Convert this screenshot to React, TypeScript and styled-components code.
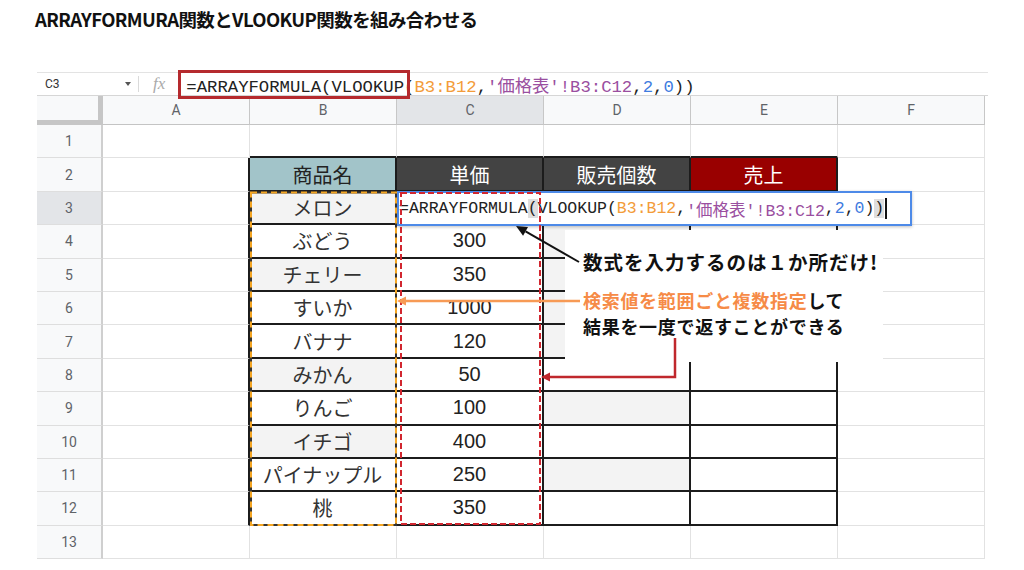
import styled, { createGlobalStyle } from "styled-components";

const GlobalStyle = createGlobalStyle`
  html, body { margin: 0; padding: 0; background: #fff; }
  body { font-family: "Noto Sans CJK JP", "Noto Sans", sans-serif; }
`;

const COLS = ["A", "B", "C", "D", "E", "F"];
const DARK = "2px solid #1c1c1c";
const GRID_LINE = "1px solid #e2e2e2";

const names = ["メロン", "ぶどう", "チェリー", "すいか", "バナナ", "みかん", "りんご", "イチゴ", "パイナップル", "桃"];
const prices = ["", "300", "350", "1000", "120", "50", "100", "400", "250", "350"];
const grayB = [3, 5, 8, 10];
const grayD = [4, 5, 6, 7, 9, 11];

const heads = [
	{ t: "商品名", bg: "#a2c4c9", fg: "#222" },
	{ t: "単価", bg: "#434343", fg: "#fff" },
	{ t: "販売個数", bg: "#434343", fg: "#fff" },
	{ t: "売上", bg: "#990000", fg: "#fff" },
];

const ORANGE = "#f39c3a";
const PURPLE = "#9a4fa0";
const BLUE = "#3f7ce0";

type Tok = { t: string; c?: string; hl?: boolean };
const formula: Tok[] = [
	{ t: "=ARRAYFORMULA" },
	{ t: "(", hl: true },
	{ t: "VLOOKUP(" },
	{ t: "B3:B12", c: ORANGE },
	{ t: "," },
	{ t: "'価格表'!B3:C12", c: PURPLE },
	{ t: "," },
	{ t: "2", c: BLUE },
	{ t: "," },
	{ t: "0", c: BLUE },
	{ t: ")" },
	{ t: ")", hl: true },
];

const Page = styled.div`
	position: relative;
	width: 1024px;
	height: 570px;
	overflow: hidden;
	background: #fff;
`;

const TitleBar = styled.header`
	height: 72px;
	padding: 4px 0 0 35px;
	box-sizing: border-box;
`;

const Title = styled.h1`
	margin: 0;
	font: 700 18.5px/30px "Noto Sans CJK JP", sans-serif;
	letter-spacing: -0.6px;
	color: #111;
`;

const Sheet = styled.div`
	margin-left: 37px;
	width: 951px;
`;

const FormulaBar = styled.div`
	display: flex;
	align-items: center;
	height: 24px;
	box-sizing: border-box;
	border-top: 1px solid #e3e3e3;
	border-bottom: 1px solid #d6d6d6;
`;

const NameBox = styled.div`
	display: flex;
	align-items: center;
	justify-content: space-between;
	width: 101px;
	box-sizing: border-box;
	padding: 0 7px 0 8px;
	font: 12px Roboto, sans-serif;
	color: #333;
`;

const Caret = styled.span`
	width: 0;
	height: 0;
	border-left: 3.5px solid transparent;
	border-right: 3.5px solid transparent;
	border-top: 4px solid #555;
`;

const Divider = styled.span`
	width: 1px;
	height: 16px;
	background: #dadada;
`;

const Fx = styled.span`
	margin: 0 21px 0 14px;
	font: italic 17px "Liberation Serif", serif;
	color: #aaa;
`;

const FormulaText = styled.span`
	font: 17.3px "Liberation Mono", "Noto Sans CJK JP", monospace;
	color: #222;
	white-space: pre;
`;

const Tk = styled.span<{ $c?: string; $hl?: boolean }>`
	color: ${(p) => p.$c ?? "inherit"};
	background: ${(p) => (p.$hl ? "#dedede" : "transparent")};
`;

const Grid = styled.div`
	display: grid;
	grid-template-columns: 66px repeat(6, 147px);
	grid-template-rows: 29px repeat(13, 33.4px);
`;

const Corner = styled.div`
	box-sizing: border-box;
	background: #f8f9fa;
	border-right: 5px solid #c6c6c6;
	border-bottom: 5px solid #c6c6c6;
`;

const ColHead = styled.div<{ $sel?: boolean }>`
	box-sizing: border-box;
	display: flex;
	align-items: center;
	justify-content: center;
	background: ${(p) => (p.$sel ? "#e3e5e8" : "#f8f9fa")};
	border-right: 1px solid #c7c7c7;
	border-bottom: 1px solid #c4c4c4;
	font: 14px Roboto, sans-serif;
	color: #5f6368;
`;

const RowNum = styled.div<{ $sel?: boolean }>`
	box-sizing: border-box;
	display: flex;
	align-items: center;
	justify-content: center;
	background: ${(p) => (p.$sel ? "#e3e5e8" : "#f8f9fa")};
	border-right: 2px solid #cfcfcf;
	border-bottom: 1px solid #dedede;
	font: 14px Roboto, sans-serif;
	color: #5f6368;
`;

const Cell = styled.div<{ $bg?: string; $fg?: string; $r?: string; $b?: string; $num?: boolean }>`
	box-sizing: border-box;
	display: flex;
	align-items: center;
	justify-content: center;
	overflow: hidden;
	white-space: nowrap;
	background: ${(p) => p.$bg ?? "#fff"};
	color: ${(p) => p.$fg ?? "#333"};
	border-right: ${(p) => p.$r ?? GRID_LINE};
	border-bottom: ${(p) => p.$b ?? GRID_LINE};
	font-size: 20px;
	font-family: ${(p) => (p.$num ? '"Liberation Sans", Arial, sans-serif' : '"Noto Sans CJK JP", sans-serif')};
`;

const Editor = styled.div`
	position: absolute;
	left: 397px;
	top: 191px;
	width: 515px;
	height: 35px;
	box-sizing: border-box;
	display: flex;
	align-items: center;
	border: 2px solid #4d8ae8;
	background: #fff;
	box-shadow: 0 1px 3px rgba(0, 0, 0, 0.25);
	font: 16.5px "Liberation Mono", "Noto Sans CJK JP", monospace;
	color: #222;
	white-space: pre;
`;

const Cursor = styled.span`
	display: inline-block;
	width: 2px;
	height: 21px;
	margin-left: 1px;
	background: #111;
`;

const Callout = styled.div`
	position: absolute;
	left: 565px;
	top: 230px;
	width: 318px;
	height: 132px;
	box-sizing: border-box;
	padding: 19px 0 0 18px;
	background: #fff;
	color: #111;
	font-family: "Noto Sans CJK JP", sans-serif;
	font-weight: 700;
`;

const Lead = styled.p`
	margin: 0 0 12px;
	font-size: 19.5px;
	line-height: 26px;
	letter-spacing: 1px;
	white-space: nowrap;
`;

const Note = styled.p`
	margin: 0;
	font-size: 18px;
	line-height: 26px;
	letter-spacing: 0.7px;
	white-space: nowrap;
`;

const Accent = styled.span`
	color: #f68b47;
`;

const Overlay = styled.svg`
	position: absolute;
	left: 0;
	top: 0;
	width: 1024px;
	height: 570px;
	pointer-events: none;
`;

function arrowHead(tx: number, ty: number, fx: number, fy: number, len: number, half: number) {
	const dx = tx - fx;
	const dy = ty - fy;
	const l = Math.hypot(dx, dy);
	const ux = dx / l;
	const uy = dy / l;
	const bx = tx - ux * len;
	const by = ty - uy * len;
	const px = -uy * half;
	const py = ux * half;
	return {
		points: `${tx},${ty} ${bx + px},${by + py} ${bx - px},${by - py}`,
		bx,
		by,
	};
}

function renderCell(r: number, c: number) {
	const inTable = (rr: number, cc: number) => rr >= 2 && rr <= 12 && cc >= 1 && cc <= 4;
	const right = inTable(r, c) || inTable(r, c + 1) ? DARK : undefined;
	const bottom = inTable(r, c) || inTable(r + 1, c) ? DARK : undefined;
	let text = "";
	let bg: string | undefined;
	let fg: string | undefined;
	let num = false;
	if (r === 2 && c >= 1 && c <= 4) {
		const h = heads[c - 1];
		text = h.t;
		bg = h.bg;
		fg = h.fg;
	} else if (r >= 3 && r <= 12) {
		if (c === 1) {
			text = names[r - 3];
			if (grayB.includes(r)) bg = "#f3f3f3";
		} else if (c === 2) {
			text = prices[r - 3];
			num = true;
			fg = "#222";
		} else if (c === 3 && grayD.includes(r)) {
			bg = "#f3f3f3";
		}
	}
	return (
		<Cell key={`${r}-${c}`} $bg={bg} $fg={fg} $r={right} $b={bottom} $num={num}>
			{text}
		</Cell>
	);
}

export default function App() {
	const black = arrowHead(516, 226, 579, 262, 11, 5);
	const orange = arrowHead(397, 301, 580, 301, 9, 4.5);
	const red = arrowHead(541, 377, 675, 377, 9, 4.5);

	return (
		<Page>
			<GlobalStyle />
			<TitleBar>
				<Title>ARRAYFORMURA関数とVLOOKUP関数を組み合わせる</Title>
			</TitleBar>

			<Sheet>
				<FormulaBar>
					<NameBox>
						C3
						<Caret />
					</NameBox>
					<Divider />
					<Fx>fx</Fx>
					<FormulaText>
						{formula.map((tk, i) => (
							<Tk key={i} $c={tk.c}>
								{tk.t}
							</Tk>
						))}
					</FormulaText>
				</FormulaBar>

				<Grid>
					<Corner />
					{COLS.map((col) => (
						<ColHead key={col} $sel={col === "C"}>
							{col}
						</ColHead>
					))}
					{Array.from({ length: 13 }, (_, i) => i + 1).map((r) => [
						<RowNum key={`n${r}`} $sel={r === 3}>
							{r}
						</RowNum>,
						...COLS.map((_, c) => renderCell(r, c)),
					])}
				</Grid>
			</Sheet>

			<Editor>
				{formula.map((tk, i) => (
					<Tk key={i} $c={tk.c} $hl={tk.hl}>
						{tk.t}
					</Tk>
				))}
				<Cursor />
			</Editor>

			<Callout>
				<Lead>数式を入力するのは１か所だけ!</Lead>
				<Note>
					<Accent>検索値を範囲ごと複数指定</Accent>して
				</Note>
				<Note>結果を一度で返すことができる</Note>
			</Callout>

			<Overlay viewBox="0 0 1024 570">
				<rect x={179.5} y={71.5} width={229} height={26} fill="none" stroke="#b52a2e" strokeWidth={3} />

				<rect x={251} y={192.5} width={145} height={332.5} fill="none" stroke="#333" strokeWidth={2} />
				<rect x={251} y={192.5} width={145} height={332.5} fill="none" stroke="#f5a623" strokeWidth={2} strokeDasharray="6 4" />

				<rect x={401} y={193} width={139} height={331} fill="none" stroke="#d1262f" strokeWidth={2} strokeDasharray="6 3" />

				<line x1={579} y1={262} x2={black.bx} y2={black.by} stroke="#111" strokeWidth={2} />
				<polygon points={black.points} fill="#111" />

				<line x1={580} y1={301} x2={orange.bx} y2={orange.by} stroke="#f79a55" strokeWidth={2.5} />
				<polygon points={orange.points} fill="#f79a55" />

				<polyline
					points={`675,338 675,377 ${red.bx},${red.by}`}
					fill="none"
					stroke="#c0282d"
					strokeWidth={2.5}
				/>
				<polygon points={red.points} fill="#c0282d" />
			</Overlay>
		</Page>
	);
}
